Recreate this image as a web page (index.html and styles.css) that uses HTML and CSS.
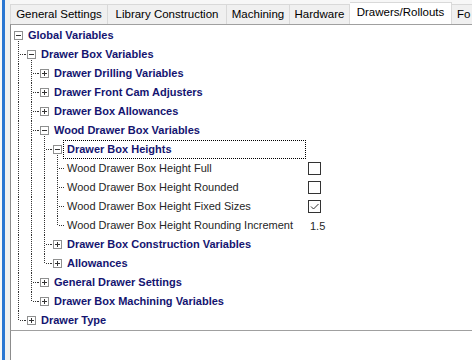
FILE: index.html
```html
<!DOCTYPE html>
<html>
<head>
<meta charset="utf-8">
<link rel="stylesheet" href="styles.css">
</head>
<body>
<div class="app">
  <div class="edge"></div>
  <div class="accent"></div>
  <div class="gutter"></div>
  <div class="main">
    <div class="tabs">
      <div class="tab w1">General Settings</div>
      <div class="tab w2">Library Construction</div>
      <div class="tab w3">Machining</div>
      <div class="tab w4">Hardware</div>
      <div class="tab sel w5">Drawers/Rollouts</div>
      <div class="tab w6">Fo</div>
    </div>
    <div class="panel">
      <div class="row"><div class="node"><span class="c x dn"><svg width="9" height="9"><rect x=".5" y=".5" width="8" height="8" fill="#fff" stroke="#8e8f8f"/><path d="M2 4.5h5" stroke="#333"/></svg></span><span class="lbl cat">Global Variables</span></div></div>
      <div class="row"><div class="node"><span class="c t"></span><span class="c x in dn"><svg width="9" height="9"><rect x=".5" y=".5" width="8" height="8" fill="#fff" stroke="#8e8f8f"/><path d="M2 4.5h5" stroke="#333"/></svg></span><span class="lbl cat">Drawer Box Variables</span></div></div>
      <div class="row"><div class="node"><span class="c v"></span><span class="c t"></span><span class="c x in"><svg width="9" height="9"><rect x=".5" y=".5" width="8" height="8" fill="#fff" stroke="#8e8f8f"/><path d="M2 4.5h5M4.5 2v5" stroke="#333"/></svg></span><span class="lbl cat">Drawer Drilling Variables</span></div></div>
      <div class="row"><div class="node"><span class="c v"></span><span class="c t"></span><span class="c x in"><svg width="9" height="9"><rect x=".5" y=".5" width="8" height="8" fill="#fff" stroke="#8e8f8f"/><path d="M2 4.5h5M4.5 2v5" stroke="#333"/></svg></span><span class="lbl cat">Drawer Front Cam Adjusters</span></div></div>
      <div class="row"><div class="node"><span class="c v"></span><span class="c t"></span><span class="c x in"><svg width="9" height="9"><rect x=".5" y=".5" width="8" height="8" fill="#fff" stroke="#8e8f8f"/><path d="M2 4.5h5M4.5 2v5" stroke="#333"/></svg></span><span class="lbl cat">Drawer Box Allowances</span></div></div>
      <div class="row"><div class="node"><span class="c v"></span><span class="c t"></span><span class="c x in dn"><svg width="9" height="9"><rect x=".5" y=".5" width="8" height="8" fill="#fff" stroke="#8e8f8f"/><path d="M2 4.5h5" stroke="#333"/></svg></span><span class="lbl cat">Wood Drawer Box Variables</span></div></div>
      <div class="row"><div class="node"><span class="c v"></span><span class="c v"></span><span class="c t"></span><span class="c x in dn"><svg width="9" height="9"><rect x=".5" y=".5" width="8" height="8" fill="#fff" stroke="#8e8f8f"/><path d="M2 4.5h5" stroke="#333"/></svg></span><span class="lbl cat focus">Drawer Box Heights</span></div></div>
      <div class="row"><div class="node"><span class="c v"></span><span class="c v"></span><span class="c v"></span><span class="c t"></span><span class="lbl prop">Wood Drawer Box Height Full</span></div><div class="val"><span class="chk"></span></div></div>
      <div class="row"><div class="node"><span class="c v"></span><span class="c v"></span><span class="c v"></span><span class="c t"></span><span class="lbl prop">Wood Drawer Box Height Rounded</span></div><div class="val"><span class="chk"></span></div></div>
      <div class="row"><div class="node"><span class="c v"></span><span class="c v"></span><span class="c v"></span><span class="c t"></span><span class="lbl prop">Wood Drawer Box Height Fixed Sizes</span></div><div class="val"><span class="chk"><svg width="11" height="11"><path d="M2 5.5l2.5 2.5 5-5" fill="none" stroke="#333" stroke-width="1"/></svg></span></div></div>
      <div class="row"><div class="node"><span class="c v"></span><span class="c v"></span><span class="c v"></span><span class="c l"></span><span class="lbl prop">Wood Drawer Box Height Rounding Increment</span></div><div class="val num">1.5</div></div>
      <div class="row"><div class="node"><span class="c v"></span><span class="c v"></span><span class="c t"></span><span class="c x in"><svg width="9" height="9"><rect x=".5" y=".5" width="8" height="8" fill="#fff" stroke="#8e8f8f"/><path d="M2 4.5h5M4.5 2v5" stroke="#333"/></svg></span><span class="lbl cat">Drawer Box Construction Variables</span></div></div>
      <div class="row"><div class="node"><span class="c v"></span><span class="c v"></span><span class="c l"></span><span class="c x in"><svg width="9" height="9"><rect x=".5" y=".5" width="8" height="8" fill="#fff" stroke="#8e8f8f"/><path d="M2 4.5h5M4.5 2v5" stroke="#333"/></svg></span><span class="lbl cat">Allowances</span></div></div>
      <div class="row"><div class="node"><span class="c v"></span><span class="c t"></span><span class="c x in"><svg width="9" height="9"><rect x=".5" y=".5" width="8" height="8" fill="#fff" stroke="#8e8f8f"/><path d="M2 4.5h5M4.5 2v5" stroke="#333"/></svg></span><span class="lbl cat">General Drawer Settings</span></div></div>
      <div class="row"><div class="node"><span class="c v"></span><span class="c l"></span><span class="c x in"><svg width="9" height="9"><rect x=".5" y=".5" width="8" height="8" fill="#fff" stroke="#8e8f8f"/><path d="M2 4.5h5M4.5 2v5" stroke="#333"/></svg></span><span class="lbl cat">Drawer Box Machining Variables</span></div></div>
      <div class="row"><div class="node"><span class="c l"></span><span class="c x in"><svg width="9" height="9"><rect x=".5" y=".5" width="8" height="8" fill="#fff" stroke="#8e8f8f"/><path d="M2 4.5h5M4.5 2v5" stroke="#333"/></svg></span><span class="lbl cat">Drawer Type</span></div></div>
    </div>
    <div class="below"></div>
  </div>
</div>
</body>
</html>
```

FILE: styles.css
```css
* { box-sizing: border-box; }
html, body { margin: 0; padding: 0; }
body {
  width: 472px;
  height: 360px;
  overflow: hidden;
  background: #fff;
  font-family: "Liberation Sans", Arial, sans-serif;
  font-size: 11px;
}
.app { display: flex; height: 360px; }
.edge { width: 2px; background: #f7f7f7; flex: none; }
.accent { width: 3px; background: #2a76d2; flex: none; }
.gutter { width: 5px; background: #f0f0f0; flex: none; }
.main { flex: 1; display: flex; flex-direction: column; min-width: 0; }

.tabs {
  height: 24px;
  flex: none;
  display: flex;
  align-items: flex-end;
  background: #f7f7f7;
  overflow: hidden;
  white-space: nowrap;
}
.tab {
  flex: none;
  height: 20px;
  background: #f0f0f0;
  border: 1px solid #d9d9d9;
  border-bottom: none;
  border-left: none;
  color: #000;
  font-size: 11.5px;
  display: flex;
  align-items: center;
  justify-content: center;
  padding-bottom: 1px;
}
.tab.w1 { width: 98px; border-left: 1px solid #d9d9d9; }
.tab.w2 { width: 119px; }
.tab.w3 { width: 63px; }
.tab.w4 { width: 60px; }
.tab.w5 { width: 102px; }
.tab.w6 { width: 40px; justify-content: flex-start; padding-left: 5px; }
.tab.sel {
  height: 22px;
  background: #fff;
  padding-bottom: 3px;
}

.panel {
  flex: none;
  height: 307px;
  border-top: 1px solid #a0a0a0;
  border-left: 1px solid #8c8c8c;
  border-bottom: 1px solid #a0a0a0;
  padding: 1px 0 0 1px;
  background: #fff;
}
.below { flex: 1; border-left: 1px solid #8c8c8c; background: #fff; }

.row {
  display: grid;
  grid-template-columns: 296px auto;
  height: 19px;
}
.node { display: flex; height: 19px; min-width: 0; }

.c {
  --vd: repeating-linear-gradient(to bottom, #333 0 1px, transparent 1px 2px);
  --hd: repeating-linear-gradient(to right, #333 0 1px, transparent 1px 2px);
  flex: none;
  width: 13px;
  height: 19px;
  display: block;
}
.v { background: var(--vd) 6px 0 / 1px 19px no-repeat; }
.t {
  background: var(--vd) 6px 0 / 1px 19px no-repeat,
              var(--hd) 8px 9px / 5px 1px no-repeat;
}
.l {
  background: var(--vd) 6px 0 / 1px 10px no-repeat,
              var(--hd) 8px 9px / 5px 1px no-repeat;
}
.x { padding: 5px 0 0 2px; }
.x svg { display: block; }
.x.in { background: var(--hd) 0 9px / 2px 1px no-repeat; }
.x.dn { background: var(--vd) 6px 15px / 1px 4px no-repeat; }
.x.in.dn {
  background: var(--hd) 0 9px / 2px 1px no-repeat,
              var(--vd) 6px 15px / 1px 4px no-repeat;
}

.lbl {
  display: block;
  height: 19px;
  line-height: 17px;
  margin-left: -1px;
  padding-left: 3px;
  border: 1px solid transparent;
  white-space: nowrap;
}
.cat { font-weight: bold; color: #141470; }
.prop { color: #262626; }
.focus {
  flex: 1;
  margin-right: 2px;
  border: 1px dotted #000;
}

.val { height: 19px; display: flex; align-items: center; }
.num { padding-left: 2px; color: #262626; }
.chk {
  width: 13px;
  height: 13px;
  border: 1px solid #333;
  background: #fff;
  display: block;
}
.chk svg { display: block; }
```
